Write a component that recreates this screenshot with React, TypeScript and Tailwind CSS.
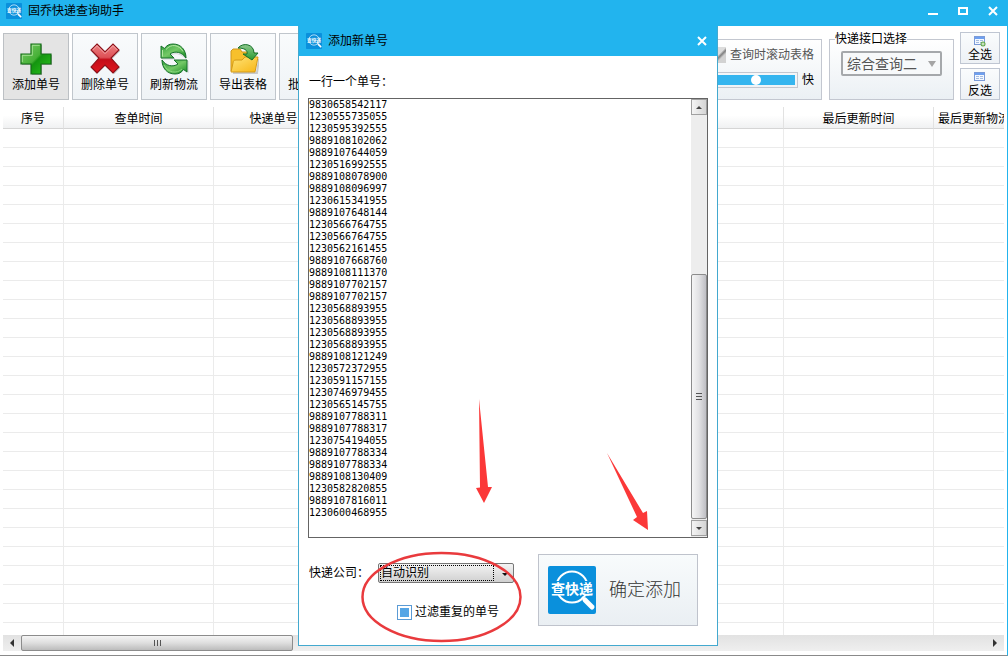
import { useState } from "react"
import type { ReactNode } from "react"

const initialNumbers = [
  "9830658542117", "1230555735055", "1230595392555", "9889108102062", "9889107644059",
  "1230516992555", "9889108078900", "9889108096997", "1230615341955", "9889107648144",
  "1230566764755", "1230566764755", "1230562161455", "9889107668760", "9889108111370",
  "9889107702157", "9889107702157", "1230568893955", "1230568893955", "1230568893955",
  "1230568893955", "9889108121249", "1230572372955", "1230591157155", "1230746979455",
  "1230565145755", "9889107788311", "9889107788317", "1230754194055", "9889107788334",
  "9889107788334", "9889108130409", "1230582820855", "9889107816011", "1230600468955",
]

const columns = ["序号", "查单时间", "快递单号", "快递公司", "物流状态", "备注", "最后更新时间", "最后更新物流信息"]

function Logo({ className }: { className: string }) {
  return (
    <svg viewBox="0 0 48 48" className={className} aria-hidden="true">
      <rect width="48" height="48" rx="2" fill="#0a90dc" />
      <circle cx="24" cy="21" r="15.5" fill="none" stroke="#fff" strokeWidth="2" />
      <path d="M34 31l3 3" stroke="#fff" strokeWidth="2" />
      <path d="M37 34l7 7" stroke="#fff" strokeWidth="5" strokeLinecap="round" />
      <rect x="2" y="15" width="44" height="14" fill="#0a90dc" />
      <text x="24" y="28" textAnchor="middle" fontSize="14" fontWeight="700" fill="#fff" fontFamily="Noto Sans CJK SC, sans-serif">
        查快递
      </text>
    </svg>
  )
}

function AddIcon() {
  return (
    <svg viewBox="0 0 32 32" className="size-8" aria-hidden="true">
      <defs>
        <linearGradient id="add" x1="0" y1="0" x2="1" y2="1">
          <stop offset="0" stopColor="#7ccc6a" />
          <stop offset=".48" stopColor="#46b036" />
          <stop offset=".54" stopColor="#149410" />
          <stop offset="1" stopColor="#2cc81c" />
        </linearGradient>
      </defs>
      <path d="M12 2h10v10h10v10H22v10H12V22H2V12h10z" fill="#000" opacity=".25" />
      <path d="M11 1h10v10h10v10H21v10H11V21H1V11h10z" fill="url(#add)" stroke="#136b16" strokeWidth="1.2" />
      <path d="M19.7 2.300h-7.400v10h-10V19" fill="none" stroke="#b4e8a4" opacity=".8" />
    </svg>
  )
}

function DeleteIcon() {
  return (
    <svg viewBox="0 0 32 32" className="size-8" aria-hidden="true">
      <defs>
        <linearGradient id="del" x1="0" y1="0" x2="0" y2="1">
          <stop offset="0" stopColor="#ee8484" />
          <stop offset=".46" stopColor="#dd5056" />
          <stop offset=".54" stopColor="#c40c18" />
          <stop offset="1" stopColor="#e01820" />
        </linearGradient>
      </defs>
      <path d="M9 2l8 8 8-8 6 6-8 8 8 9-6 6-9-8-8 8-6-6 7-9-7-8z" fill="#000" opacity=".22" />
      <path d="M8 1l8 8 8-8 6 6-8 8 8 9-6 6-8-8-8 8-6-6 8-9-8-8z" fill="url(#del)" stroke="#8c1018" strokeWidth="1.100" />
      <path d="M3.500 7.200L8 2.600l8 8 8-8 4.500 4.500" fill="none" stroke="#f7b8b8" opacity=".8" />
    </svg>
  )
}

function RefreshIcon() {
  return (
    <svg viewBox="0 0 32 32" className="size-8" aria-hidden="true">
      <defs>
        <linearGradient id="ref" x1="0" y1="0" x2="1" y2="1">
          <stop offset="0" stopColor="#2fa03a" />
          <stop offset=".5" stopColor="#74c866" />
          <stop offset="1" stopColor="#128a20" />
        </linearGradient>
      </defs>
      <path d="M4 4v12h13l-4-4c5-3 11-1 16 5M30 30V18H17l4 4" fill="none" stroke="#000" opacity=".15" />
      <g fill="url(#ref)" stroke="#16702a" strokeLinejoin="round">
        <path d="M3 3v12h13l-4-4c5-3.500 12-2 16 4C28 7 23 1 15 1 11 1 8.500 2.500 6.500 5.500z" />
        <path d="M29 29V17H16l4 4c-5 3.500-12 2-16-4 0 8 5 14 13 14 4 0 6.500-1.500 8.500-4.500z" />
      </g>
      <path d="M4.500 7v6.500M8 6.500c5-6 13-5 17 2" fill="none" stroke="#b5e8a5" />
      <path d="M6 22c4 8 13 9 18 4" fill="none" stroke="#8bd880" />
    </svg>
  )
}

function ExportIcon() {
  return (
    <svg viewBox="0 0 32 32" className="size-8" aria-hidden="true">
      <defs>
        <linearGradient id="exp" x1="0" y1="0" x2="1" y2="1">
          <stop offset="0" stopColor="#ffe47a" />
          <stop offset="1" stopColor="#f7b614" />
        </linearGradient>
        <linearGradient id="expArrow" x1="0" y1="0" x2="0" y2="1">
          <stop offset="0" stopColor="#8cc88c" />
          <stop offset="1" stopColor="#2c9c30" />
        </linearGradient>
      </defs>
      <path d="M6 30h24l2-14" fill="none" stroke="#000" strokeWidth="2" opacity=".18" />
      <path d="M4 28V8l2-2h7l2 3h12v8" fill="#f7c02c" stroke="#d0961c" />
      <path d="M4 29l2-9c0-2 1-3 3-3h6l3-3h13l-3 15z" fill="url(#exp)" stroke="#d49a18" strokeLinejoin="round" />
      <path d="M11 5c5-6 16-4 16 5h4l-6 7-9-6h4c1-4-3-6-9-6z" fill="url(#expArrow)" stroke="#17702a" strokeLinejoin="round" />
    </svg>
  )
}

function TableIcon({ add }: { add?: boolean }) {
  return (
    <svg viewBox="0 0 12 12" className="h-3 w-3" aria-hidden="true">
      <rect x=".5" y="1.500" width="10" height="8" fill="#f4f8ff" stroke="#7b9bd8" />
      <path d="M1 3h9" stroke="#6ea0f0" strokeWidth="2" />
      <path d="M2 5.500h3M6 5.500h3M2 7.500h3M6 7.500h3" stroke="#a5bce0" />
      {add && <circle cx="9" cy="9" r="2.500" fill="#63a84c" />}
      {add && <path d="M9 7.500v3M7.500 9h3" stroke="#fff" strokeWidth=".8" />}
    </svg>
  )
}

function ToolButton({ label, active, children }: { label: string; active?: boolean; children?: ReactNode }) {
  return (
    <button
      className={
        active
          ? "flex h-[67px] w-[66px] shrink-0 flex-col items-center justify-end gap-0.5 border border-[#bcc0c4] bg-[#e4e4e4] pb-1.5"
          : "flex h-[67px] w-[66px] shrink-0 flex-col items-center justify-end gap-0.5 border border-[#c0c6cc] bg-linear-to-b from-[#f9fbfc] to-[#eff3f6] pb-1.5"
      }
    >
      {children}
      <span className="whitespace-nowrap">{label}</span>
    </button>
  )
}

function SelectButton({ label, add }: { label: string; add?: boolean }) {
  return (
    <button className="flex h-8 w-10 flex-col items-center justify-end border border-[#bfc6d2] bg-linear-to-b from-[#fafcfd] to-[#edf1f5]">
      <TableIcon add={add} />
      <span>{label}</span>
    </button>
  )
}

function AddDialog() {
  const [numbers, setNumbers] = useState(initialNumbers.join("\n"))
  const [filter, setFilter] = useState(true)

  return (
    <section className="absolute top-[26px] left-[298px] flex h-[620px] w-[420px] flex-col border border-t-0 border-[#43a9cf] bg-white">
      <header className="flex h-[30px] shrink-0 items-center bg-[#22b4ee] pr-[9px] pl-[7px]">
        <Logo className="size-4" />
        <h2 className="ml-1.5 flex-1">添加新单号</h2>
        <button aria-label="关闭">
          <svg viewBox="0 0 12 12" className="size-3" aria-hidden="true">
            <path d="M2 2l8 8M10 2l-8 8" stroke="#fff" strokeWidth="2" />
          </svg>
        </button>
      </header>

      <div className="px-[9px]">
        <label htmlFor="numbers" className="flex h-[42px] items-center pt-2.5 pl-px">
          一行一个单号：
        </label>
        <div className="flex h-[440px] border border-[#646464]">
          <textarea
            id="numbers"
            value={numbers}
            onChange={(e) => setNumbers(e.target.value)}
            spellCheck={false}
            className="flex-1 resize-none overflow-hidden font-['DejaVu_Sans_Mono',monospace] text-[10px] leading-3 outline-none"
          />
          <div className="flex w-4 flex-col bg-[#ededed] text-[#444]">
            <button aria-label="向上" className="flex h-4 items-center justify-center border border-[#a0a0a0] bg-linear-to-r from-[#f4f4f4] to-[#d5d5d5]">
              <svg viewBox="0 0 6 3" className="h-[3px] w-1.5" aria-hidden="true"><path d="M3 0l3 3H0z" fill="currentColor" /></svg>
            </button>
            <div className="mt-[159px] flex flex-1 items-center justify-center rounded-xs border border-[#8c8c8c] bg-linear-to-r from-[#f5f5f5] via-[#e2e2e4] to-[#bfbfc4]">
              <div className="flex w-1.5 flex-col gap-0.5">
                <i className="h-px bg-[#555]" />
                <i className="h-px bg-[#555]" />
                <i className="h-px bg-[#555]" />
              </div>
            </div>
            <button aria-label="向下" className="mt-px mb-px flex h-4 items-center justify-center border border-[#a0a0a0] bg-linear-to-r from-[#f4f4f4] to-[#d5d5d5]">
              <svg viewBox="0 0 6 3" className="h-[3px] w-1.5" aria-hidden="true"><path d="M3 3l3-3H0z" fill="currentColor" /></svg>
            </button>
          </div>
        </div>

        <div className="flex pt-4 pl-px">
          <div className="w-[229px] pt-[9px]">
            <div className="flex items-center">
              <label htmlFor="company" className="w-[69px]">快递公司：</label>
              <div className="relative w-[136px]">
                <select id="company" className="h-5 w-full appearance-none rounded-xs border border-[#777] bg-linear-to-b from-[#f4f4f4] to-[#d0d0d0] pl-0.5 leading-4">
                  <option>自动识别</option>
                </select>
                <span className="pointer-events-none absolute inset-y-0.5 right-5 left-0.5 border border-dotted border-black" />
                <svg viewBox="0 0 6 3" className="pointer-events-none absolute top-2.5 right-1.5 h-[3px] w-1.5" aria-hidden="true">
                  <path d="M0 0h6L3 3z" fill="#111" />
                </svg>
              </div>
            </div>
            <label className="mt-[21px] ml-[88px] flex items-center gap-[3px]">
              <input
                type="checkbox"
                checked={filter}
                onChange={(e) => setFilter(e.target.checked)}
                className="size-[15px] appearance-none border border-[#5b9bd5] bg-white p-0.5 checked:bg-[#55a5e5] checked:bg-clip-content"
              />
              过滤重复的单号
            </label>
          </div>
          <button className="flex h-[72px] w-40 items-center gap-[13px] border border-[#bfc3cc] bg-linear-to-b from-[#f8fbfc] to-[#eaeff3] pl-[9px]">
            <Logo className="size-12" />
            <span className="text-lg font-light text-[#333]">确定添加</span>
          </button>
        </div>
      </div>
    </section>
  )
}

function Marks() {
  return (
    <svg viewBox="0 0 160 244" className="pointer-events-none absolute top-[398px] left-[361px] h-[244px] w-40 overflow-visible" aria-hidden="true">
      <ellipse cx="80.500" cy="199" rx="79" ry="44" fill="none" stroke="#e93a3d" strokeWidth="2.500" />
      <g fill="#fb3838">
        <path d="M118 1l9 88h4l-8 16-8-15 4-.500z" />
        <path d="M246 55l36 60 4-2 1 19-15-10 4-3z" />
      </g>
    </svg>
  )
}

export default function App() {
  const [scrollTable, setScrollTable] = useState(true)
  const [speed, setSpeed] = useState(79)

  return (
    <main className="relative flex h-screen flex-col overflow-hidden border-r border-b border-r-[#22b4ee] border-b-[#8a8a8a] bg-white font-['Liberation_Sans','Noto_Sans_CJK_SC',sans-serif] text-xs leading-4 text-black">
      <header className="flex h-[26px] shrink-0 items-center bg-[#22b4ee] pr-2 pl-1.5 pb-1">
        <Logo className="size-4" />
        <h1 className="ml-1.5 flex-1">固乔快递查询助手</h1>
        <div className="flex gap-[18px]">
          <button aria-label="最小化">
            <svg viewBox="0 0 12 12" className="size-3" aria-hidden="true"><path d="M1 9h10" stroke="#fff" strokeWidth="2" /></svg>
          </button>
          <button aria-label="最大化">
            <svg viewBox="0 0 12 12" className="size-3" aria-hidden="true"><rect x="2" y="3" width="8" height="6" fill="none" stroke="#fff" strokeWidth="2" /></svg>
          </button>
          <button aria-label="关闭">
            <svg viewBox="0 0 12 12" className="size-3" aria-hidden="true"><path d="M2 2l8 8M10 2l-8 8" stroke="#fff" strokeWidth="2" /></svg>
          </button>
        </div>
      </header>

      <div className="flex h-[81px] shrink-0 items-end gap-[3px] pr-[7px] pb-[7px] pl-[3px]">
        <ToolButton label="添加单号" active><AddIcon /></ToolButton>
        <ToolButton label="删除单号"><DeleteIcon /></ToolButton>
        <ToolButton label="刷新物流"><RefreshIcon /></ToolButton>
        <ToolButton label="导出表格"><ExportIcon /></ToolButton>
        <ToolButton label="批量操作" />

        <div className="ml-auto h-[61px] w-[212px] border border-[#c3c7d0] bg-linear-to-b from-white to-[#ebf0f4] px-[7px] pt-[7px] text-[#555]">
          <label className="flex items-center justify-end gap-1">
            <input
              type="checkbox"
              checked={scrollTable}
              onChange={(e) => setScrollTable(e.target.checked)}
              className="size-4 appearance-none bg-linear-135 from-[#dcdcdc] from-50% via-[#808080] via-60% to-[#d2d2d2] to-70%"
            />
            查询时滚动表格
          </label>
          <div className="mt-[9px] flex items-center justify-end gap-1 text-black">
            <input
              type="range"
              aria-label="滚动速度"
              value={speed}
              onChange={(e) => setSpeed(Number(e.target.value))}
              className="h-4 w-44 appearance-none border border-[#c3c7d0] bg-[#35b5ef] bg-clip-content p-0.5 [&::-webkit-slider-thumb]:size-2.5 [&::-webkit-slider-thumb]:appearance-none [&::-webkit-slider-thumb]:rounded-full [&::-webkit-slider-thumb]:bg-white"
            />
            快
          </div>
        </div>

        <fieldset className="ml-1 h-[69px] w-[125px] border border-[#c3c7d0] bg-linear-to-b from-white to-[#ebf0f4] px-[11px] pt-1">
          <legend className="-ml-1.5">快递接口选择</legend>
          <div className="relative">
            <select aria-label="快递接口" className="h-[25px] w-full appearance-none rounded-xs border-2 border-[#a5a8ab] bg-[#f7f9fa] pl-1 text-sm leading-5 text-[#555]">
              <option>综合查询二</option>
            </select>
            <svg viewBox="0 0 8 6" className="pointer-events-none absolute top-2.5 right-1.5 h-1.5 w-2" aria-hidden="true">
              <path d="M0 0h8L4 6z" fill="#a5a5a5" />
            </svg>
          </div>
        </fieldset>

        <div className="ml-[3px] flex flex-col gap-1">
          <SelectButton label="全选" add />
          <SelectButton label="反选" />
        </div>
      </div>

      <div className="mx-[3px] flex-1 overflow-hidden">
        <table className="w-[1112px] table-fixed border-separate border-spacing-0">
          <colgroup>
            <col className="w-[61px]" />
            <col className="w-[150px]" />
            <col className="w-[120px]" />
            <col className="w-[150px]" />
            <col className="w-[130px]" />
            <col className="w-[170px]" />
            <col className="w-[150px]" />
            <col />
          </colgroup>
          <thead>
            <tr className="h-[22px]">
              {columns.map((name) => (
                <th key={name} className="overflow-hidden border-r border-b border-r-[#e2e2e2] border-b-[#d5d5d5] bg-linear-to-b from-white from-40% to-[#f0f1f2] p-0 pt-0.5 font-normal whitespace-nowrap last:pl-1 last:text-left">
                  {name}
                </th>
              ))}
            </tr>
          </thead>
          <tbody>
            {Array.from({ length: 60 }, (_, row) => (
              <tr key={row} className="h-[19px]">
                {columns.map((name) => (
                  <td key={name} className="border-r border-b border-[#ebebeb] p-0" />
                ))}
              </tr>
            ))}
          </tbody>
        </table>
      </div>

      <div className="mx-[3px] mb-1 flex h-4 shrink-0 bg-linear-to-b from-[#e2e2e2] to-[#efefef]">
        <button aria-label="向左" className="flex w-[18px] items-center justify-center">
          <svg viewBox="0 0 4 8" className="h-2 w-1" aria-hidden="true"><path d="M4 0v8L0 4z" fill="#333" /></svg>
        </button>
        <div className="flex w-[272px] items-center justify-center gap-0.5 rounded-xs border border-[#8c8c8c] bg-linear-to-b from-[#f5f5f5] via-[#dedede] to-[#bcbcbc]">
          <i className="h-1.5 w-px bg-[#555]" />
          <i className="h-1.5 w-px bg-[#555]" />
          <i className="h-1.5 w-px bg-[#555]" />
        </div>
        <button aria-label="向右" className="ml-auto flex w-[18px] items-center justify-center">
          <svg viewBox="0 0 4 8" className="h-2 w-1" aria-hidden="true"><path d="M0 0v8l4-4z" fill="#333" /></svg>
        </button>
      </div>

      <AddDialog />
      <Marks />
    </main>
  )
}
